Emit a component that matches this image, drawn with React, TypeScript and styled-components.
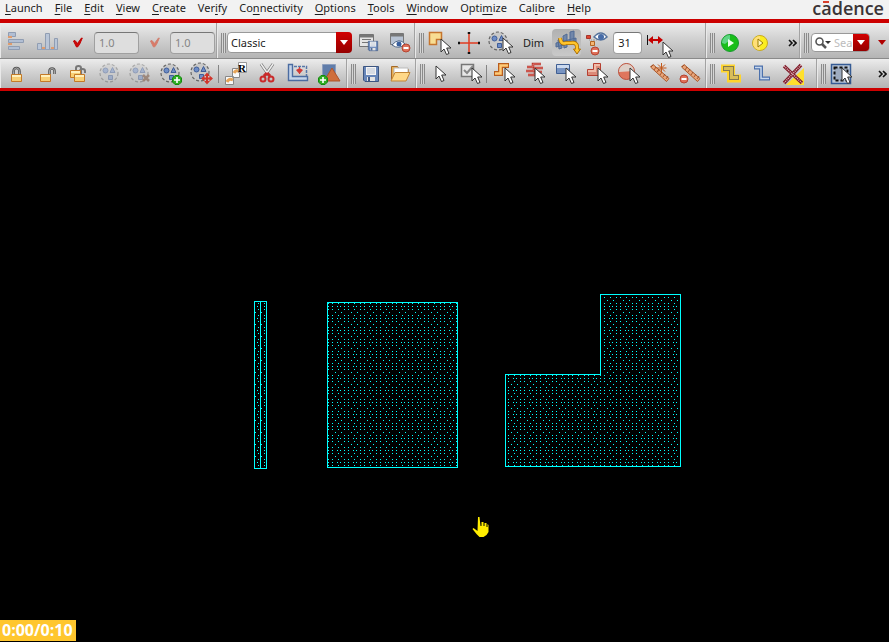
import React from "react";
import styled, { createGlobalStyle, css } from "styled-components";

const GlobalStyle = createGlobalStyle`
  * { box-sizing: border-box; }
  body { margin: 0; background: #000; font-family: "Noto Sans", "Open Sans", sans-serif; font-size: 11px; color: #1c1c1c; }
  button, input, select { font: inherit; color: inherit; }
`;

const Window = styled.div`
  display: flex;
  flex-direction: column;
  min-height: 100vh;
  position: relative;
`;

const MenuBar = styled.nav`
  display: flex;
  align-items: flex-start;
  justify-content: space-between;
  height: 23px;
  background: #f2f2f2;
  border-bottom: 4px solid #cc0000;
`;

const Menus = styled.div`
  display: flex;
  gap: 12px;
  padding-left: 5px;
`;

const MenuButton = styled.button`
  border: 0;
  padding: 0;
  background: none;
  line-height: 16px;
  white-space: nowrap;
  u { text-underline-offset: 2px; }
`;

const Brand = styled.div`
  padding-right: 5px;
  font: 600 18px/17px "Open Sans", sans-serif;
  color: #3b3436;
`;

const Accented = styled.span`
  position: relative;
  &::before {
    content: "";
    position: absolute;
    top: 5px;
    left: 2px;
    width: 6px;
    height: 2px;
    background: #d8402c;
  }
`;

const Row = styled.div<{ $last?: boolean }>`
  display: flex;
  height: ${(p) => (p.$last ? 32 : 36)}px;
  background: linear-gradient(#ececec, #d4d4d4 40%, #b4b4b4);
  border-bottom: ${(p) => (p.$last ? "3px solid #cc0000" : "1px solid #8a8a8a")};
  overflow: hidden;
  > * { padding-top: ${(p) => (p.$last ? 1 : 4)}px; }
`;

const Group = styled.div<{ $width?: number }>`
  display: flex;
  align-items: center;
  flex: ${(p) => (p.$width ? `0 0 ${p.$width}px` : "1 0 0")};
  min-width: 0;
  border-right: 1px solid #a2a2a2;
  box-shadow: inset 1px 0 #e9e9e9;
  &:last-child { border-right: 0; }
`;

const Handle = styled.span`
  flex: none;
  width: 5px;
  height: 20px;
  margin: 0 0 0 4px;
  background: repeating-linear-gradient(90deg, #8b8b8b 0 1px, #d6d6d6 1px 2px);
`;

const Divider = styled.span`
  flex: none;
  width: 1px;
  height: 18px;
  margin: 0 1px;
  background: #858585;
`;

const ToolButton = styled.button<{ $active?: boolean; $dim?: boolean; $narrow?: boolean }>`
  display: grid;
  place-items: center;
  flex: none;
  width: ${(p) => (p.$narrow ? 29 : 31)}px;
  height: 27px;
  padding: 0;
  border: 0;
  border-radius: 4px;
  background: ${(p) => (p.$active ? "linear-gradient(#b1b1b1, #c9c9c9)" : "none")};
  svg { display: block; opacity: ${(p) => (p.$dim ? 0.45 : 1)}; }
`;

const NumberField = styled.input<{ $width: number }>`
  flex: none;
  width: ${(p) => p.$width}px;
  height: 22px;
  padding: 0 4px;
  border: 1px solid #a0a0a0;
  border-top-color: #777;
  border-radius: 4px;
  background: #fff;
  margin: 0 1px;
  &:disabled { background: #dedede; color: #858585; }
`;

const redButton = css`
  display: grid;
  place-items: center;
  border: 0;
  padding: 0;
  background: linear-gradient(#d20000, #950000);
`;

const Combo = styled.div`
  position: relative;
  flex: none;
  width: 125px;
  height: 21px;
  margin-left: 1px;
`;

const Select = styled.select`
  appearance: none;
  width: 100%;
  height: 100%;
  border: 1px solid #999;
  border-radius: 4px;
  background: #fff;
  padding: 0 20px 0 3px;
`;

const ComboArrow = styled.span`
  ${redButton}
  position: absolute;
  inset: 0 0 0 auto;
  width: 16px;
  border-radius: 0 4px 4px 0;
  pointer-events: none;
`;

const Label = styled.label`
  flex: none;
  padding: 0 8px;
`;

const Search = styled.div`
  display: flex;
  align-items: center;
  flex: 0 1 59px;
  min-width: 0;
  height: 19px;
  margin-left: 2px;
  border: 1px solid #999;
  border-radius: 4px;
  background: #fff;
  overflow: hidden;
  svg { flex: none; }
`;

const SearchInput = styled.input`
  flex: 1 1 0;
  min-width: 0;
  width: 0;
  border: 0;
  padding: 0;
  outline: 0;
  background: none;
  &::placeholder { color: #bcbcbc; opacity: 1; }
`;

const SearchButton = styled.button`
  ${redButton}
  flex: none;
  width: 16px;
  height: 100%;
`;

const SearchMenu = styled.button`
  border: 0;
  padding: 0 3px 0 0;
  background: none;
  width: 19px;
  display: grid;
  place-items: center end;
`;

const More = styled.button<{ $edge?: boolean }>`
  margin-left: auto;
  border: 0;
  padding: 0 ${(p) => (p.$edge ? 2 : 3)}px 0 0;
  background: none;
  svg { display: block; }
`;

const Canvas = styled.main`
  display: flex;
  flex: 1;
  background: #000;
`;

const Drawing = styled.svg`
  flex: 1;
  width: 100%;
`;

const Timer = styled.output`
  position: absolute;
  left: 0;
  bottom: 1px;
  padding: 0 3px 0 2px;
  background: #ffc62e;
  color: #fff;
  font: 700 16px/21px "Open Sans", "Noto Sans", sans-serif;
`;

const Pointer = ({ x, y }: { x: number; y: number }) => (
  <path transform={`translate(${x} ${y})`} d="M0 0v13l3-3 2.500 5.500 2.500-1L5.700 9H10z" fill="#fff" stroke="#333" />
);

const Cluster = ({ x = 12, y = 12 }: { x?: number; y?: number }) => (
  <g transform={`translate(${x} ${y})`}>
    <circle r="9" fill="#c8c8c8" stroke="#666" strokeWidth="1.200" strokeDasharray="3 2" />
    <g fill="#6d8cc6" stroke="#3f5d98">
      <circle cx="-3.500" cy="-2.500" r="2.500" />
      <path d="M3.500-5.500 6-.5H1zM-.5 2.500h4v4h-4z" />
    </g>
  </g>
);

const Floppy = ({ x, y, s = 16 }: { x: number; y: number; s?: number }) => (
  <g transform={`translate(${x} ${y}) scale(${s / 16})`}>
    <path d="M.5.5h15v15H2l-1.500-1.500z" fill="#6786b9" stroke="#3c5580" />
    <path d="M3 1h10v8H3z" fill="#f4f4f4" />
    <path d="M4 3h8M4 5h8M4 7h8" stroke="#b9c3d4" />
    <path d="M4 11h8v4H4z" fill="#e4e4e4" />
    <path d="M5 11h2v4H5z" fill="#405a88" />
  </g>
);

const Minus = ({ x, y }: { x: number; y: number }) => (
  <g transform={`translate(${x} ${y})`}>
    <circle r="4" fill="#df7059" stroke="#b54531" />
    <path d="M-2.500 0h5" stroke="#fff" strokeWidth="2" />
  </g>
);

const Plus = ({ x, y }: { x: number; y: number }) => (
  <g transform={`translate(${x} ${y})`}>
    <path d="M-2-4.500h4L4.500-2v4L2 4.500h-4L-4.500 2v-4z" fill="#2fad22" stroke="#148a0e" />
    <path d="M-3 0h6M0-3v6" stroke="#fff" strokeWidth="1.600" />
  </g>
);

const LockBody = ({ x, y }: { x: number; y: number }) => (
  <g transform={`translate(${x} ${y})`}>
    <path d="M.5.5h10v7H.5z" fill="#f8cf75" stroke="#c47a28" />
    <path d="M1 2h9" stroke="#fff0bd" strokeWidth="2" />
  </g>
);

const Padlock = ({ x, y, open }: { x: number; y: number; open?: boolean }) => {
  const shackle = open ? "M9.500 7V3Q9.500 .5 12 .5T14.500 3V6" : "M2.500 7V3.500Q2.500 0 5.500 0T8.500 3.500V7";
  return (
    <g transform={`translate(${x} ${y})`}>
      <path d={shackle} fill="none" stroke="#555" strokeWidth="2.600" />
      <path d={shackle} fill="none" stroke="#bbb" strokeWidth=".8" />
      <LockBody x={0} y={6} />
    </g>
  );
};

const Ruler = () => (
  <g>
    <path d="M3.500 5 6 2.500l16 14-2.500 3z" fill="#e9a477" stroke="#ac5a2c" />
    <path d="m6 3-2 2m5 0-2 3m5-1-2 3m5 0-2 3m5-1-2 3m5-1-2 3" stroke="#8f4420" strokeWidth=".8" />
  </g>
);

const icons: Record<string, React.ReactNode> = {
  align: (
    <g>
      <path d="M4.500 1.500h7v4h-7zM4.500 8.500h15v3h-15zM4.500 15.500h11v3h-11z" fill="#b1bed3" stroke="#909db2" />
      <path d="M4 5h4v2H4zm0 7h4v2H4z" fill="#df9b6d" />
    </g>
  ),
  bars: (
    <g>
      <path d="M2.500 12.500h4v6h-4zM10.500 2.500h4v16h-4zM19.500 7.500h3v11h-3z" fill="#b9c5d7" stroke="#909db2" />
      <path d="M2 18.500h21" stroke="#95a3ba" />
      <path d="M7 16h3v2H7zm9 0h3v2h-3z" fill="#df9b6d" />
    </g>
  ),
  check: <path d="m7.500 10 1.500-.5 2.500 3 4-5.500h.8l-2.800 6.500-2 2.500h-1z" fill="#cb0a0a" stroke="#c00000" />,
  checkPale: <path d="m7.500 10 1.500-.5 2.500 3 4-5.500h.8l-2.800 6.500-2 2.500h-1z" fill="#da7967" stroke="#d08070" />,
  savePreset: (
    <g>
      <path d="M3.500 3.500h14v12h-14z" fill="#e5e5e5" stroke="#737373" />
      <path d="M4 5h13" stroke="#777" strokeWidth="3" />
      <path d="M6 8.500h9m-9 3h6" stroke="#777" />
      <Floppy x={12} y={10} s={10} />
    </g>
  ),
  hidePreset: (
    <g>
      <path d="M3.500 2.500h13v11h-13z" fill="#b8c3d3" stroke="#777" />
      <path d="M4 4h12" stroke="#777" strokeWidth="3" />
      <path d="M5 14q7-8 13-1-6 6-13 1z" fill="#fff" stroke="#4d6587" />
      <circle cx="12" cy="13" r="2.500" fill="#385e9c" />
      <Minus x={19} y={17} />
    </g>
  ),
  selectShape: <g><path d="M2.500 1.500h12v7h-5v5h-7z" fill="#f8dd92" stroke="#c6752d" strokeWidth="1.500" /><Pointer x={14} y={8} /></g>,
  cross: <g><path d="M1 12h22M12 1v22" stroke="#e13c22" strokeWidth="1.500" /><path d="M1 12h2m18 0h2M12 1v2m0 18v2" stroke="#111" strokeWidth="2.500" /></g>,
  selectCluster: <g><Cluster x={10} y={10} /><Pointer x={15} y={7} /></g>,
  dynamic: (
    <g>
      <path d="m3 9 3-1 1 9-3 1zm5-4 4-2v13l-3 1zm7-4 4-1v10l-4 1zM1 12l20-5v4L1 16z" fill="#7187aa" stroke="#516b95" />
      <path d="M5 7q1 7 6 5h5q6-1 6 4v3" fill="none" stroke="#a96b00" strokeWidth="4" />
      <path d="M18.500 18h7l-3.500 5z" fill="#ffc52d" stroke="#a96b00" />
      <path d="M5 7q1 7 6 5h5q6-1 6 4v3" fill="none" stroke="#ffc52d" strokeWidth="2.500" />
    </g>
  ),
  visibility: (
    <g>
      <path d="M4 5v4h5v8m0-8h4" fill="none" stroke="#999" strokeDasharray="1 1" />
      <path d="M1.500 4.500h4v3h-4z" fill="#df4733" stroke="#a5352c" />
      <path d="M5.500 10.500h4v4h-4z" fill="#f4b776" stroke="#b46520" />
      <path d="M9 6q7-8 13 0-6 6-13 0z" fill="#fff" stroke="#56739c" strokeWidth="1.500" />
      <circle cx="16" cy="6" r="3" fill="#476ca7" />
      <Minus x={10} y={20} />
    </g>
  ),
  measure: (
    <g>
      <path d="M.5 4v10" stroke="#111" />
      <path d="M3 9h11" stroke="#c50000" strokeWidth="2" />
      <path d="M1 9 6 5v8zm15 0-5-4v8z" fill="#c50000" />
      <Pointer x={16} y={11} />
    </g>
  ),
  run: (
    <g>
      <circle cx="12" cy="12" r="8.500" fill="#19be19" stroke="#169a2d" />
      <path d="M4 12a8 8 0 0 1 8-8v5l-5 4z" fill="#5ed584" />
      <path d="m10 8 6 4-6 4z" fill="#edffed" />
    </g>
  ),
  step: (
    <g>
      <circle cx="12" cy="12" r="7.500" fill="#fbed20" stroke="#c7a923" />
      <path d="M5 12a7 7 0 0 1 7-7v14a7 7 0 0 1-7-7z" fill="#ffdf79" />
      <path d="m10 8 5 4-5 4z" fill="#fff6ba" stroke="#9b7c00" />
    </g>
  ),
  lock: <Padlock x={7} y={6} />,
  unlock: <Padlock x={5} y={6} open />,
  unlockAll: (
    <g>
      <path d="M10 9V6q0-2 2.500-2T15 6v6m-1-3q0-2 2.500-2T19 9v2" fill="none" stroke="#777" strokeWidth="2" />
      <LockBody x={4} y={8} />
      <LockBody x={8} y={12} />
    </g>
  ),
  group: <Cluster x={12} y={11} />,
  ungroup: <g><Cluster x={11} y={11} /><path d="m15 13 6 6m0-6-6 6" stroke="#6a3c22" strokeWidth="2.500" /></g>,
  addGroup: <g><Cluster x={11} y={11} /><Plus x={18} y={18} /></g>,
  moveGroup: (
    <g>
      <Cluster x={10} y={10} />
      <path d="M17 12v9M12.500 16.500h9" stroke="#d1352c" strokeWidth="2" />
      <path d="m17 10.500 3 3.500h-6zm0 12 3-3.500h-6zM11 16.500l3.500-3v6zm12 0-3.500-3v6z" fill="#d1352c" />
    </g>
  ),
  rename: (
    <g>
      <path d="M8.500 6.500h7v9h-7zM1.500 14.500h8v8h-8z" fill="#f8f8f8" stroke="#888" />
      <path d="M3 20q2-4 6-2m1-7q2-4 6-1" fill="none" stroke="#e6a459" strokeWidth="3" />
      <path d="M14.500.5h8v10h-8z" fill="#fff" stroke="#999" />
      <text x="14" y="10" fontFamily="Liberation Serif" fontSize="11" fontWeight="700" fill="#000">R</text>
    </g>
  ),
  cut: (
    <g>
      <path d="m6 2 9 13M18 2 9 15" stroke="#777" strokeWidth="3" />
      <path d="m6 2 9 13M18 2 9 15" stroke="#eee" strokeWidth="1.500" />
      <path d="m12 11 3 3m-3-3-3 3" stroke="#ca2a2a" strokeWidth="3" />
      <g fill="none" stroke="#ca2a2a" strokeWidth="2"><circle cx="8" cy="17" r="2.500" /><circle cx="16" cy="17" r="2.500" /></g>
    </g>
  ),
  stretch: (
    <g>
      <path d="M2.500 2.500h4v12h15v4h-19z" fill="#c4d4ea" stroke="#4b6ca1" strokeWidth="1.400" />
      <path d="M8 4.500h12.500V14" fill="none" stroke="#5877a8" strokeWidth="1.500" strokeDasharray="3 1" />
      <path d="M13.500 5v8" stroke="#d13a36" strokeDasharray="1 1" />
      <path d="m10 8 3.500-2L17 8l-3.500 4z" fill="#d13a36" />
    </g>
  ),
  addShape: (
    <g>
      <path d="M5.500 2.500h13v13h-13z" fill="#607daa" stroke="#8e9fbd" />
      <path d="m15 6 8 13H7z" fill="#cf6e3b" stroke="#ac542c" />
      <Plus x={6} y={18} />
    </g>
  ),
  save: <Floppy x={4} y={4} />,
  open: (
    <g>
      <path d="M3.500 18V4.500h6l2 3h9v3" fill="#e8af54" stroke="#a56927" />
      <path d="M6 6h14v6H6z" fill="#fff" stroke="#bbb" />
      <path d="M3 19 7 10.500h15L18 19z" fill="#ffd888" stroke="#c28535" />
    </g>
  ),
  pointer: <Pointer x={8} y={4} />,
  selectCheck: (
    <g>
      <path d="M3.500 2.500h12v12h-12z" fill="#e8e8e8" stroke="#777" strokeWidth="1.500" />
      <path d="m6 8 3 3 6-7" fill="none" stroke="#888" strokeWidth="2" />
      <Pointer x={14} y={6} />
    </g>
  ),
  pathSelect: (
    <g>
      <path d="M2 11.500h6.500v-8H17" fill="none" stroke="#b95d1d" strokeWidth="5" />
      <path d="M3 11.500h5.500v-8H16" fill="none" stroke="#ffca77" strokeWidth="2.500" />
      <Pointer x={13} y={6} />
    </g>
  ),
  netSelect: (
    <g>
      <path d="M4 5h6V2h8M3 9h8V6h9M5 13h7v-3h7" fill="none" stroke="#b9362d" strokeWidth="2.500" />
      <path d="M4 5h6V2h8M3 9h8V6h9M5 13h7v-3h7" fill="none" stroke="#ee9389" strokeWidth=".7" />
      <Pointer x={12} y={6} />
    </g>
  ),
  rectSelect: (
    <g>
      <path d="M2.500 2.500h13v9h-13z" fill="#7894c2" stroke="#405f93" />
      <path d="M3 4.500h12" stroke="#cbd9ee" strokeWidth="3" />
      <Pointer x={12} y={6} />
    </g>
  ),
  polySelect: (
    <g>
      <path d="M8.500 1.500h7v12h-13v-6h6z" fill="#dc8a78" stroke="#b63f31" />
      <path d="M3 9h7V3h5" fill="none" stroke="#f0bba8" strokeWidth="2" />
      <Pointer x={13} y={6} />
    </g>
  ),
  circleSelect: (
    <g>
      <circle cx="10.500" cy="9.500" r="8" fill="#df765d" stroke="#b9503c" />
      <path d="M3 10a7.500 7.500 0 0 1 15-1z" fill="#ddd0c8" />
      <Pointer x={14} y={6} />
    </g>
  ),
  rulerAdd: <g><Ruler /><path d="M14.500 1v10M9.500 6h10m-8.500-3.500 7 7m0-7-7 7" stroke="#c25a1e" /></g>,
  rulerRemove: <g><Ruler /><Minus x={6} y={17} /></g>,
  pathHalo: (
    <g>
      <path d="M2 6.500h10v10h10" fill="none" stroke="#ffd52d" strokeWidth="8" />
      <path d="M4 6.500h8.500v9h7.500" fill="none" stroke="#85794f" strokeWidth="5" />
      <path d="M5 6.500h7.500v9h6.500" fill="none" stroke="#d8be59" strokeWidth="3" />
    </g>
  ),
  path: (
    <g>
      <path d="M4 5.500h7v11h9" fill="none" stroke="#4c71ac" strokeWidth="4" />
      <path d="M5 5.500h6v11h8" fill="none" stroke="#c8d8ed" strokeWidth="1.500" />
    </g>
  ),
  clear: (
    <g>
      <path d="M23 6v17H5z" fill="#ffe02c" />
      <path d="m3 4 18 17M20 3 3 21" stroke="#811d2b" strokeWidth="3.500" />
      <path d="m3 4 18 17M20 3 3 21" stroke="#ddb3b8" strokeWidth="1.500" strokeDasharray="1 1" />
    </g>
  ),
  area: (
    <g>
      <path d="M2.500 2.500h19v19h-19z" fill="#bac7d9" stroke="#355b94" strokeWidth="1.500" />
      <path d="M5.500 5.500h13v13h-13z" fill="#9eacc0" stroke="#111" strokeWidth="2" strokeDasharray="3 2" />
      <Pointer x={13} y={6} />
    </g>
  ),
};

const Tool = ({ name, ...rest }: { name: string; $active?: boolean; $dim?: boolean; $narrow?: boolean }) => (
  <ToolButton type="button" aria-label={name} {...rest}>
    <svg width="24" height="24" viewBox="0 0 24 24" overflow="visible" aria-hidden="true">{icons[name]}</svg>
  </ToolButton>
);

const Down = ({ color }: { color: string }) => (
  <svg width="8" height="5" viewBox="0 0 8 5" aria-hidden="true"><path d="M0 0h8L4 5z" fill={color} /></svg>
);

const Overflow = ({ $edge }: { $edge?: boolean }) => (
  <More type="button" aria-label="More tools" $edge={$edge}>
    <svg width="9" height="8" viewBox="0 0 9 8"><path d="m1 1 3 3-3 3m4-6 3 3-3 3" fill="none" stroke="#111" strokeWidth="1.600" /></svg>
  </More>
);

const menus: [string, number][] = [
  ["Launch", 0], ["File", 0], ["Edit", 0], ["View", 0], ["Create", 0], ["Verify", 3], ["Connectivity", 2],
  ["Options", 0], ["Tools", 0], ["Window", 0], ["Optimize", 4], ["Calibre", 3], ["Help", 0],
];

const dots: [number, number[]][] = [
  [2, [2, 8, 12]],
  [5, [5, 15]],
  [8, [2, 8, 12]],
  [11, [1, 4, 8, 12]],
];

export default function App() {
  return (
    <Window>
      <GlobalStyle />
      <MenuBar>
        <Menus>
          {menus.map(([label, at]) => (
            <MenuButton type="button" key={label}>{label.slice(0, at)}<u>{label[at]}</u>{label.slice(at + 1)}</MenuButton>
          ))}
        </Menus>
        <Brand>c<Accented>a</Accented>dence</Brand>
      </MenuBar>
      <Row>
        <Group $width={217}>
          <Tool name="align" /><Tool name="bars" /><Tool name="check" />
          <NumberField $width={45} defaultValue="1.0" aria-label="Horizontal spacing" disabled />
          <Tool name="checkPale" $narrow />
          <NumberField $width={45} defaultValue="1.0" aria-label="Vertical spacing" disabled />
        </Group>
        <Group $width={198}>
          <Handle />
          <Combo>
            <Select aria-label="Workspace" defaultValue="Classic"><option>Classic</option></Select>
            <ComboArrow><Down color="#fff" /></ComboArrow>
          </Combo>
          <Tool name="savePreset" /><Tool name="hidePreset" />
        </Group>
        <Group $width={291}>
          <Handle />
          <Tool name="selectShape" $narrow /><Tool name="cross" /><Tool name="selectCluster" />
          <Label htmlFor="dim">Dim</Label>
          <Tool name="dynamic" $active $narrow /><Tool name="visibility" />
          <NumberField id="dim" $width={29} defaultValue="31" />
          <Tool name="measure" />
        </Group>
        <Group $width={94}>
          <Handle /><Tool name="run" $narrow /><Tool name="step" /><Overflow $edge />
        </Group>
        <Group>
          <Handle />
          <Search>
            <svg width="22" height="16" viewBox="0 0 22 16"><circle cx="7.500" cy="6.500" r="3.500" fill="#fff" stroke="#555" strokeWidth="1.600" /><path d="m10 9 4 4" stroke="#555" strokeWidth="2.500" /><path d="M13 6h6l-3 3z" fill="#333" /></svg>
            <SearchInput placeholder="Search" aria-label="Search" />
            <SearchButton type="button" aria-label="Search options"><Down color="#fff" /></SearchButton>
          </Search>
          <SearchMenu type="button" aria-label="Search history"><Down color="#b00000" /></SearchMenu>
        </Group>
      </Row>
      <Row $last>
        <Group $width={347}>
          <Tool name="lock" /><Tool name="unlock" /><Tool name="unlockAll" />
          <Tool name="group" $dim /><Tool name="ungroup" $dim /><Tool name="addGroup" /><Tool name="moveGroup" />
          <Divider />
          <Tool name="rename" /><Tool name="cut" /><Tool name="stretch" /><Tool name="addShape" />
        </Group>
        <Group $width={69}>
          <Handle /><Tool name="save" $narrow /><Tool name="open" $narrow />
        </Group>
        <Group $width={290}>
          <Handle />
          <Tool name="pointer" $narrow /><Tool name="selectCheck" /><Divider />
          <Tool name="pathSelect" /><Tool name="netSelect" /><Tool name="rectSelect" /><Tool name="polySelect" />
          <Tool name="circleSelect" /><Tool name="rulerAdd" /><Tool name="rulerRemove" />
        </Group>
        <Group $width={111}>
          <Handle /><Tool name="pathHalo" /><Tool name="path" /><Tool name="clear" />
        </Group>
        <Group>
          <Handle /><Tool name="area" $narrow /><Overflow $edge />
        </Group>
      </Row>
      <Canvas>
        <Drawing aria-label="Layout canvas" shapeRendering="crispEdges">
          <defs>
            <pattern id="stipple" width="16" height="12" patternUnits="userSpaceOnUse">
              {dots.map(([y, xs]) => xs.map((x) => <rect key={`${x}-${y}`} x={x} y={y} width="1" height="1" fill="#00ffff" />))}
            </pattern>
          </defs>
          <g fill="url(#stipple)" stroke="#00ffff">
            <path d="M254.500 210.500h12v167h-12zM260.500 210.500v167" />
            <path d="M327.500 211.500h130v165h-130z" />
            <path d="M600.500 203.500h80v172h-175v-92h95z" />
          </g>
          <path d="M478 426h1.500l1 9h1v-4h2v4h1v-3h2v4h1v-3l1 1v7l-2 3-3 2h-4l-3-3-4-5 1-1 4 3z" fill="#ffed00" shapeRendering="auto" />
        </Drawing>
      </Canvas>
      <Timer>0:00/0:10</Timer>
    </Window>
  );
}
